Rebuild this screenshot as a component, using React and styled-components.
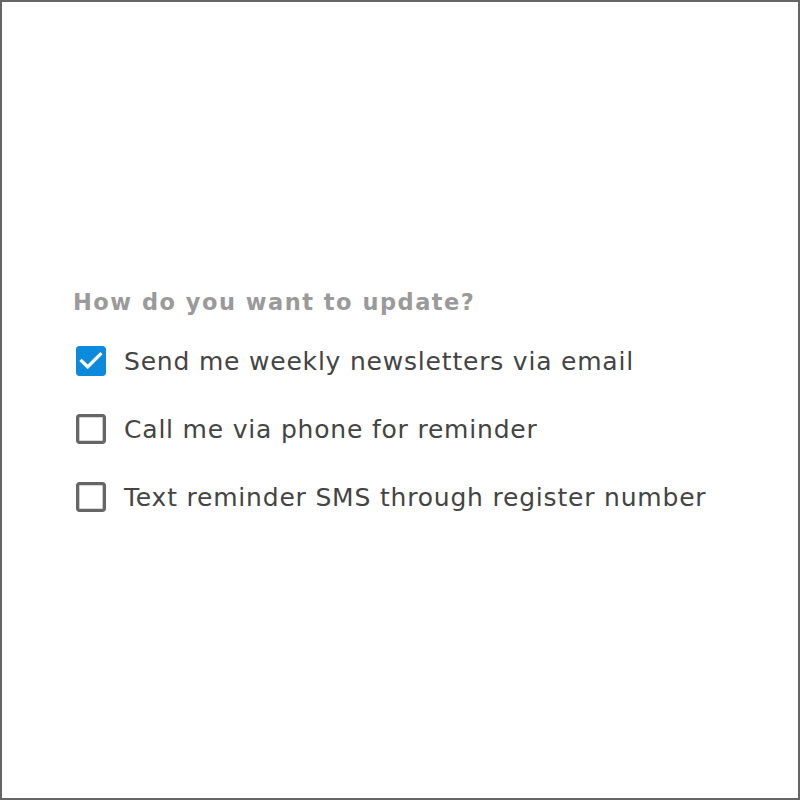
import React from "react";
import styled, { createGlobalStyle } from "styled-components";

const Global = createGlobalStyle`
  html, body { margin: 0; padding: 0; background: #fff; }
  body { font-family: "DejaVu Sans", "Liberation Sans", sans-serif; }
`;

const Page = styled.div`
  width: 800px;
  height: 800px;
  box-sizing: border-box;
  border: 2px solid #666;
  display: flex;
  flex-direction: column;
  justify-content: center;
  padding: 4px 0 0 69px;
`;

const Group = styled.div`
  display: flex;
  flex-direction: column;
`;

const Title = styled.div`
  font-family: "DejaVu Sans", sans-serif;
  font-weight: 700;
  font-size: 22.5px;
  letter-spacing: 1.5px;
  color: #9a9a9a;
  line-height: 30px;
  margin-bottom: 24px;
  padding-left: 2px;
`;

const List = styled.div`
  display: flex;
  flex-direction: column;
  gap: 28px;
`;

const Row = styled.label`
  display: flex;
  align-items: center;
  gap: 13px;
  height: 40px;
  cursor: pointer;
`;

const Label = styled.span`
  font-family: "DejaVu Sans", sans-serif;
  font-size: 25px;
  letter-spacing: 0.8px;
  color: #444;
`;

const Box = styled.svg`
  width: 40px;
  height: 40px;
  flex: none;
`;

function CheckIcon({ checked }) {
  return checked ? (
    <Box viewBox="0 0 24 24">
      <path fill="#fff" d="M5 5h14v14H5z" />
      <path
        fill="#0b8ade"
        d="M19 3H5c-1.11 0-2 .9-2 2v14c0 1.1.89 2 2 2h14c1.11 0 2-.9 2-2V5c0-1.1-.89-2-2-2zm-9 14l-5-5 1.41-1.41L10 14.17l7.59-7.59L19 8l-9 9z"
      />
    </Box>
  ) : (
    <Box viewBox="0 0 24 24">
      <path
        fill="#666"
        d="M19 5v14H5V5h14m0-2H5c-1.1 0-2 .9-2 2v14c0 1.1.9 2 2 2h14c1.1 0 2-.9 2-2V5c0-1.1-.9-2-2-2z"
      />
    </Box>
  );
}

const items = [
  { text: "Send me weekly newsletters via email", checked: true },
  { text: "Call me via phone for reminder", checked: false },
  { text: "Text reminder SMS through register number", checked: false },
];

export default function App() {
  return (
    <>
      <Global />
      <Page>
        <Group>
          <Title>How do you want to update?</Title>
          <List>
            {items.map((it) => (
              <Row key={it.text}>
                <CheckIcon checked={it.checked} />
                <Label>{it.text}</Label>
              </Row>
            ))}
          </List>
        </Group>
      </Page>
    </>
  );
}
